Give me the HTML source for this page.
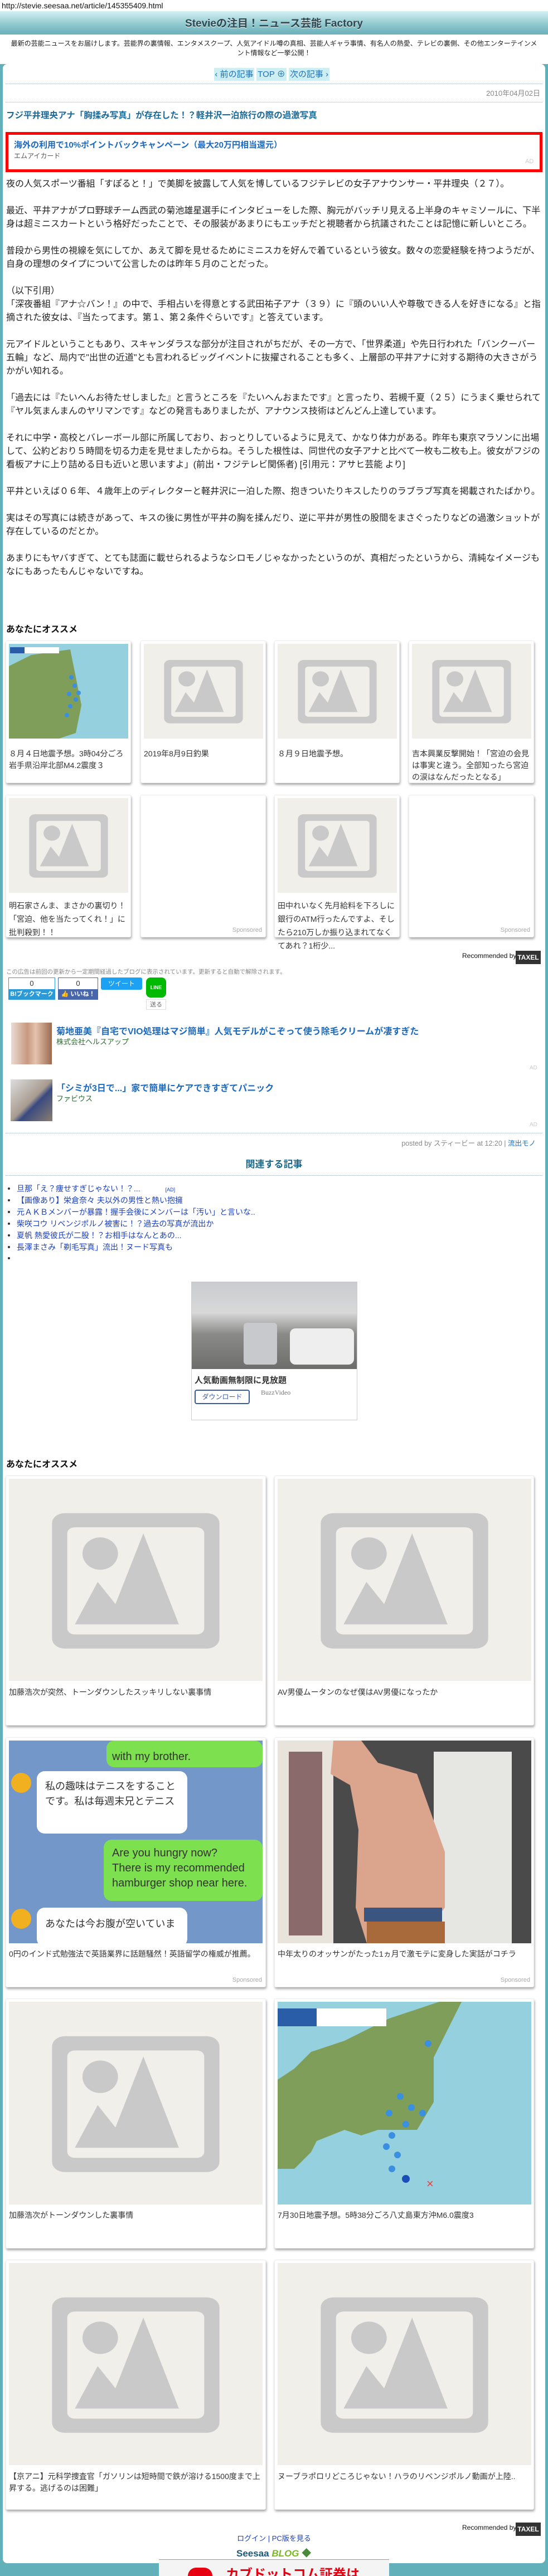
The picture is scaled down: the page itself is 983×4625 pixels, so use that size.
<!DOCTYPE html>
<html><head><meta charset="utf-8"><style>
*{margin:0;padding:0;box-sizing:border-box}
body{width:983px;height:4625px;position:relative;background:#62b0b9;font-family:"Liberation Sans","Noto Sans CJK JP",sans-serif;color:#222;overflow:hidden}
.a{position:absolute}
.nw{white-space:nowrap}
#top{left:0;top:0;width:983px;height:115px;background:#fff}
#hdr{left:0;top:20px;width:983px;height:42px;background:linear-gradient(#d4f1f3,#8cc6cd 60%,#6cb0b9);text-align:center;font-size:19px;font-weight:bold;color:#2d4650;line-height:46px;text-shadow:0 1px 0 #fff}
#box{left:5px;top:115px;width:973px;height:4487px;background:#fff;border-radius:8px}
.nav{top:122px;height:23px;background:#cdeef2;color:#1f6fb0;font-size:15px;line-height:23px;text-align:center}
.dot{left:10px;width:963px;border-top:1px dotted #9ab}
.body{left:11px;font-size:16px;line-height:24px;color:#222}
.card{background:#fff;border-radius:3px;box-shadow:1px 3px 4px rgba(0,0,0,.35);border:1px solid #eee}
.card .t{position:absolute;left:5px;right:5px;font-size:14px;line-height:21px;color:#333}
.sp{position:absolute;right:6px;bottom:6px;font-size:11px;color:#aaa}
.rel{left:30px;font-size:14px;color:#1a3fbf}
.bul{left:14px;width:4px;height:4px;border-radius:2px;background:#333}
</style></head><body>
<div id="top" class="a"></div>
<div class="a nw" style="left:3px;top:2px;font-size:14px;color:#111">http://stevie.seesaa.net/article/145355409.html</div>
<div id="hdr" class="a">Stevieの注目！ニュース芸能 Factory</div>
<div class="a nw" style="left:0;top:70px;width:983px;font-size:12px;line-height:17px;text-align:center;color:#222">最新の芸能ニュースをお届けします。芸能界の裏情報、エンタメスクープ、人気アイドル噂の真相、芸能人ギャラ事情、有名人の熱愛、テレビの裏側、その他エンターテインメ<br>ント情報など一挙公開！</div>
<div id="box" class="a"></div>
<div class="a nav" style="left:384px;width:72px">‹ 前の記事</div>
<div class="a nav" style="left:460px;width:54px">TOP ⊕</div>
<div class="a nav" style="left:518px;width:73px">次の記事 ›</div>
<div class="a dot" style="top:150px"></div>
<div class="a" style="right:14px;top:157px;font-size:13px;color:#888">2010年04月02日</div>
<div class="a dot" style="top:183px"></div>
<div class="a nw" style="left:11px;top:195px;font-size:15.5px;font-weight:bold;color:#1b6a9a">フジ平井理央アナ「胸揉み写真」が存在した！？軽井沢一泊旅行の際の過激写真</div>
<div class="a" style="left:10px;top:237px;width:963px;height:72px;border:5px solid #f00;background:#fff"></div>
<div class="a nw" style="left:25px;top:249px;font-size:15px;font-weight:bold;color:#1c6ac0">海外の利用で10%ポイントバックキャンペーン（最大20万円相当還元）</div>
<div class="a nw" style="left:25px;top:271px;font-size:12px;color:#555">エムアイカード</div>
<div class="a" style="left:942px;top:284px;font-size:11px;color:#ccc">AD</div>
<div class="a body nw" style="top:319px">夜の人気スポーツ番組「すぽると！」で美脚を披露して人気を博しているフジテレビの女子アナウンサー・平井理央（２７）。<br><br>最近、平井アナがプロ野球チーム西武の菊池雄星選手にインタビューをした際、胸元がバッチリ見える上半身のキャミソールに、下半<br>身は超ミニスカートという格好だったことで、その服装があまりにもエッチだと視聴者から抗議されたことは記憶に新しいところ。<br><br>普段から男性の視線を気にしてか、あえて脚を見せるためにミニスカを好んで着ているという彼女。数々の恋愛経験を持つようだが、<br>自身の理想のタイプについて公言したのは昨年５月のことだった。<br><br>（以下引用）<br>「深夜番組『アナ☆バン！』の中で、手相占いを得意とする武田祐子アナ（３９）に『頭のいい人や尊敬できる人を好きになる』と指<br>摘された彼女は、『当たってます。第１、第２条件ぐらいです』と答えています。<br><br>元アイドルということもあり、スキャンダラスな部分が注目されがちだが、その一方で、「世界柔道」や先日行われた「バンクーバー<br>五輪」など、局内で"出世の近道"とも言われるビッグイベントに抜擢されることも多く、上層部の平井アナに対する期待の大きさがう<br>かがい知れる。<br><br>「過去には『たいへんお待たせしました』と言うところを『たいへんおまたです』と言ったり、若槻千夏（２５）にうまく乗せられて<br>『ヤル気まんまんのヤリマンです』などの発言もありましたが、アナウンス技術はどんどん上達しています。<br><br>それに中学・高校とバレーボール部に所属しており、おっとりしているように見えて、かなり体力がある。昨年も東京マラソンに出場<br>して、公約どおり５時間を切る力走を見せましたからね。そうした根性は、同世代の女子アナと比べて一枚も二枚も上。彼女がフジの<br>看板アナに上り詰める日も近いと思いますよ」(前出・フジテレビ関係者) [引用元：アサヒ芸能 より]<br><br>平井といえば０６年、４歳年上のディレクターと軽井沢に一泊した際、抱きついたりキスしたりのラブラブ写真を掲載されたばかり。<br><br>実はその写真には続きがあって、キスの後に男性が平井の胸を揉んだり、逆に平井が男性の股間をまさぐったりなどの過激ショットが<br>存在しているのだとか。<br><br>あまりにもヤバすぎて、とても誌面に載せられるようなシロモノじゃなかったというのが、真相だったというから、清純なイメージも<br>なにもあったもんじゃないですね。</div>

<svg width="0" height="0" style="position:absolute"><defs>
<symbol id="ph" viewBox="0 0 100 100" preserveAspectRatio="none"><rect width="100" height="100" fill="#f0efea"/><rect x="17" y="17" width="66" height="67" rx="5" fill="#c9c9c9"/><rect x="23" y="24" width="54" height="53" rx="3" fill="#f0efea"/><ellipse cx="36" cy="37" rx="7" ry="8" fill="#c9c9c9"/><polygon points="26,72 35,51 42,62 53,27 67,72" fill="#c9c9c9"/></symbol>
</defs></svg>

<div class="a" style="left:11px;top:1116px;font-size:16px;font-weight:bold;color:#111">あなたにオススメ</div>

<div class="a card" style="left:10px;top:1150px;width:225px;height:256px"><svg class="a" style="left:5px;top:5px" width="214" height="170" viewBox="0 0 214 170"><rect width="214" height="170" fill="#95d0de"/><path d="M0 40 L40 20 L110 10 L120 60 L130 110 L120 160 L90 170 L0 170Z" fill="#7f9e5a"/><rect x="2" y="6" width="88" height="11" fill="#fff"/><rect x="2" y="6" width="26" height="11" fill="#2a5da8"/><g fill="#3b8fe0"><circle cx="112" cy="60" r="4"/><circle cx="118" cy="75" r="4"/><circle cx="108" cy="90" r="4"/><circle cx="120" cy="100" r="4"/><circle cx="110" cy="112" r="4"/><circle cx="125" cy="88" r="4"/><circle cx="104" cy="128" r="4"/></g></svg><div class="t" style="top:192px">８月４日地震予想。3時04分ごろ岩手県沿岸北部M4.2震度３</div></div>
<div class="a card" style="left:252px;top:1150px;width:225px;height:256px"><svg class="a" style="left:5px;top:5px" width="214" height="170"><use href="#ph" width="214" height="170"/></svg><div class="t" style="top:192px">2019年8月9日釣果</div></div>
<div class="a card" style="left:492px;top:1150px;width:225px;height:256px"><svg class="a" style="left:5px;top:5px" width="214" height="170"><use href="#ph" width="214" height="170"/></svg><div class="t" style="top:192px">８月９日地震予想。</div></div>
<div class="a card" style="left:733px;top:1150px;width:225px;height:256px"><svg class="a" style="left:5px;top:5px" width="214" height="170"><use href="#ph" width="214" height="170"/></svg><div class="t" style="top:192px">吉本興業反撃開始！「宮迫の会見は事実と違う。全部知ったら宮迫の涙はなんだったとなる」</div></div>

<div class="a card" style="left:10px;top:1427px;width:225px;height:256px"><svg class="a" style="left:5px;top:5px" width="214" height="170"><use href="#ph" width="214" height="170"/></svg><div class="t" style="top:186px;font-size:14px;line-height:24px">明石家さんま、まさかの裏切り！「宮迫、他を当たってくれ！」に批判殺到！！</div></div>
<div class="a card" style="left:252px;top:1427px;width:225px;height:256px"><span class="sp">Sponsored</span></div>
<div class="a card" style="left:492px;top:1427px;width:225px;height:256px"><svg class="a" style="left:5px;top:5px" width="214" height="170"><use href="#ph" width="214" height="170"/></svg><div class="t" style="top:186px;font-size:14px;line-height:24px">田中れいなく先月給料を下ろしに銀行のATM行ったんですよ、そしたら210万しか振り込まれてなくてあれ？1桁少...</div></div>
<div class="a card" style="left:733px;top:1427px;width:225px;height:256px"><span class="sp">Sponsored</span></div>

<div class="a nw" style="left:829px;top:1709px;font-size:12px;color:#111">Recommended by</div>
<div class="a" style="left:925px;top:1707px;width:45px;height:24px;background:#333;color:#fff;font-size:12px;font-weight:bold;text-align:center;line-height:24px">TAXEL</div>
<div class="a nw" style="left:11px;top:1737px;font-size:10.5px;color:#888">この広告は前回の更新から一定期間経過したブログに表示されています。更新すると自動で解除されます。</div>
<div class="a" style="left:15px;top:1755px;width:84px;height:40px;border:1px solid #2d9ad8;background:#fff"><div style="text-align:center;font-size:13px;line-height:20px;color:#333">0</div><div class="nw" style="background:#2d9ad8;color:#fff;font-size:11px;font-weight:bold;line-height:19px;text-align:center">B!ブックマーク</div></div>
<div class="a" style="left:104px;top:1755px;width:72px;height:40px;border:1px solid #4867aa;background:#fff"><div style="text-align:center;font-size:13px;line-height:20px;color:#333">0</div><div class="nw" style="background:#4867aa;color:#fff;font-size:11px;font-weight:bold;line-height:19px;text-align:center">👍 いいね！</div></div>
<div class="a nw" style="left:181px;top:1755px;width:74px;height:22px;background:#1da1f2;border-radius:3px;color:#fff;font-size:12px;line-height:22px;text-align:center">ツイート</div>
<div class="a" style="left:262px;top:1755px;width:36px;height:36px;background:#00b900;border-radius:8px;color:#fff;font-size:9px;font-weight:bold;text-align:center;line-height:36px">LINE</div>
<div class="a" style="left:262px;top:1794px;width:36px;height:19px;border:1px solid #ddd;font-size:11px;color:#666;text-align:center;line-height:18px">送る</div>

<div class="a" style="left:20px;top:1836px;width:73px;height:75px;background:linear-gradient(90deg,#e9dcd3,#c89880 40%,#e6c3ae 60%,#9a6a50)"></div>
<div class="a nw" style="left:101px;top:1838px;font-size:16px;font-weight:bold;color:#1c6ac0">菊地亜美『自宅でVIO処理はマジ簡単』人気モデルがこぞって使う除毛クリームが凄すぎた</div>
<div class="a nw" style="left:101px;top:1860px;font-size:13px;color:#2b6a30">株式会社ヘルスアップ</div>
<div class="a" style="left:950px;top:1912px;font-size:10px;color:#ccc">AD</div>
<div class="a" style="left:19px;top:1938px;width:75px;height:75px;background:linear-gradient(135deg,#ddd,#a89c90 50%,#3a4a80 60%,#8a7d70)"></div>
<div class="a nw" style="left:101px;top:1940px;font-size:16px;font-weight:bold;color:#1c6ac0">「シミが3日で...」家で簡単にケアできすぎてパニック</div>
<div class="a nw" style="left:101px;top:1962px;font-size:13px;color:#2b6a30">ファビウス</div>
<div class="a" style="left:950px;top:2014px;font-size:10px;color:#ccc">AD</div>
<div class="a dot" style="top:2034px"></div>
<div class="a nw" style="right:22px;top:2042px;font-size:12.5px;color:#888">posted by スティービー at 12:20 | <span style="color:#1c6ac0">流出モノ</span></div>
<div class="a" style="left:0;width:983px;top:2076px;text-align:center;font-size:17px;font-weight:bold;color:#1b6a8a">関連する記事</div>
<div class="a dot" style="top:2110px"></div>
<div class="a bul" style="top:2132px"></div><div class="a rel nw" style="top:2124px">旦那「え？痩せすぎじゃない！？...<span style="font-size:9px;margin-left:45px">[AD]</span></div>
<div class="a bul" style="top:2153px"></div><div class="a rel nw" style="top:2145px">【画像あり】栄倉奈々 夫以外の男性と熱い抱擁</div>
<div class="a bul" style="top:2174px"></div><div class="a rel nw" style="top:2166px">元ＡＫＢメンバーが暴露！握手会後にメンバーは「汚い」と言いな..</div>
<div class="a bul" style="top:2195px"></div><div class="a rel nw" style="top:2187px">柴咲コウ リベンジポルノ被害に！？過去の写真が流出か</div>
<div class="a bul" style="top:2216px"></div><div class="a rel nw" style="top:2208px">夏帆 熱愛彼氏が二股！？お相手はなんとあの...</div>
<div class="a bul" style="top:2237px"></div><div class="a rel nw" style="top:2229px">長澤まさみ「剃毛写真」流出！ヌード写真も</div>
<div class="a bul" style="top:2257px"></div>

<div class="a" style="left:343px;top:2301px;width:298px;height:249px;border:1px solid #ccc;background:#fff"></div>
<div class="a" style="left:344px;top:2302px;width:296px;height:156px;background:linear-gradient(#c9ccd0,#d8d8d8 35%,#8a8a88 60%,#6d6d6c)"></div>
<div class="a" style="left:437px;top:2375px;width:60px;height:75px;background:#c7c9cc;border-radius:6px"></div>
<div class="a" style="left:520px;top:2385px;width:115px;height:65px;background:#eeeeee;border-radius:10px"></div>
<div class="a nw" style="left:349px;top:2467px;font-size:15px;font-weight:bold;color:#333">人気動画無制限に見放題</div>
<div class="a" style="left:349px;top:2495px;width:99px;height:26px;border:2px solid #3a5a9a;border-radius:4px;text-align:center;font-size:12px;line-height:22px;color:#3a5a9a">ダウンロード</div>
<div class="a nw" style="left:468px;top:2493px;font-size:12px;color:#777;font-family:'Liberation Serif',serif">BuzzVideo</div>

<div class="a" style="left:11px;top:2615px;font-size:16px;font-weight:bold;color:#111">あなたにオススメ</div>

<div class="a card" style="left:10px;top:2649px;width:467px;height:449px"><svg class="a" style="left:5px;top:5px" width="455" height="363"><use href="#ph" width="455" height="363"/></svg><div class="t" style="top:378px">加藤浩次が突然、トーンダウンしたスッキリしない裏事情</div></div>
<div class="a card" style="left:492px;top:2649px;width:466px;height:449px"><svg class="a" style="left:5px;top:5px" width="455" height="363"><use href="#ph" width="455" height="363"/></svg><div class="t" style="top:378px">AV男優ムータンのなぜ僕はAV男優になったか</div></div>

<div class="a card" style="left:10px;top:3119px;width:467px;height:449px"><svg class="a" style="left:5px;top:5px" width="455" height="364" viewBox="0 0 455 364"><rect width="455" height="364" fill="#7397c9"/><rect x="175" y="0" width="280" height="48" rx="14" fill="#7de04e"/><text x="185" y="35" font-size="20" fill="#333" font-family="Liberation Sans">with my brother.</text><circle cx="22" cy="76" r="18" fill="#f0b020"/><rect x="50" y="55" width="270" height="112" rx="14" fill="#fff"/><text x="65" y="88" font-size="18" fill="#333" font-family="Noto Sans CJK JP">私の趣味はテニスをすること</text><text x="65" y="115" font-size="18" fill="#333" font-family="Noto Sans CJK JP">です。私は毎週末兄とテニス</text><rect x="170" y="178" width="285" height="110" rx="14" fill="#7de04e"/><text x="185" y="208" font-size="20" fill="#333" font-family="Liberation Sans">Are you hungry now?</text><text x="185" y="235" font-size="20" fill="#333" font-family="Liberation Sans">There is my recommended</text><text x="185" y="262" font-size="20" fill="#333" font-family="Liberation Sans">hamburger shop near here.</text><circle cx="22" cy="320" r="18" fill="#f0b020"/><rect x="50" y="300" width="270" height="70" rx="14" fill="#fff"/><text x="65" y="335" font-size="18" fill="#333" font-family="Noto Sans CJK JP">あなたは今お腹が空いていま</text></svg><div class="t" style="top:378px">0円のインド式勉強法で英語業界に話題騒然！英語留学の権威が推薦。</div><span class="sp">Sponsored</span></div>
<div class="a card" style="left:492px;top:3119px;width:466px;height:449px"><svg class="a" style="left:5px;top:5px" width="455" height="364" viewBox="0 0 455 364"><rect width="455" height="364" fill="#4a4a4a"/><rect x="0" y="0" width="100" height="364" fill="#e8e4dc"/><rect x="20" y="20" width="60" height="330" fill="#8a6a6a"/><rect x="280" y="20" width="140" height="344" fill="#e6e6e2"/><path d="M100 0 L150 0 L180 40 L250 60 L300 200 L300 300 L250 364 L160 364 L140 300 L145 160 L130 80 L95 60 Z" fill="#dba58d"/><rect x="155" y="300" width="140" height="25" fill="#3a5580"/><rect x="160" y="325" width="140" height="39" fill="#a86a3a"/></svg><div class="t" style="top:378px">中年太りのオッサンがたった1ヵ月で激モテに変身した実話がコチラ</div><span class="sp">Sponsored</span></div>

<div class="a card" style="left:10px;top:3588px;width:467px;height:449px"><svg class="a" style="left:5px;top:5px" width="455" height="364"><use href="#ph" width="455" height="364"/></svg><div class="t" style="top:378px">加藤浩次がトーンダウンした裏事情</div></div>
<div class="a card" style="left:492px;top:3588px;width:466px;height:449px"><svg class="a" style="left:5px;top:5px" width="455" height="364" viewBox="0 0 455 364"><rect width="455" height="364" fill="#95d0de"/><path d="M0 140 L30 120 L60 90 L120 70 L200 30 L290 0 L330 0 L280 100 L280 180 L250 230 L180 230 L150 240 L120 230 L70 250 L60 270 L30 300 L0 300 Z" fill="#7f9e5a"/><rect x="0" y="12" width="195" height="32" fill="#fff"/><rect x="0" y="12" width="70" height="32" fill="#2a5da8"/><g fill="#3b8fe0"><circle cx="270" cy="75" r="6"/><circle cx="220" cy="170" r="6"/><circle cx="240" cy="190" r="6"/><circle cx="260" cy="200" r="6"/><circle cx="200" cy="200" r="6"/><circle cx="230" cy="220" r="6"/><circle cx="205" cy="240" r="6"/><circle cx="195" cy="260" r="6"/><circle cx="215" cy="275" r="6"/><circle cx="205" cy="300" r="6"/></g><circle cx="230" cy="318" r="7" fill="#1c4eb8"/><text x="267" y="334" font-size="22" fill="#e64040">×</text></svg><div class="t" style="top:378px">7月30日地震予想。5時38分ごろ八丈島東方沖M6.0震度3</div></div>

<div class="a card" style="left:10px;top:4057px;width:467px;height:449px"><svg class="a" style="left:5px;top:5px" width="455" height="363"><use href="#ph" width="455" height="363"/></svg><div class="t" style="top:378px">【京アニ】元科学捜査官「ガソリンは短時間で鉄が溶ける1500度まで上昇する。逃げるのは困難」</div></div>
<div class="a card" style="left:492px;top:4057px;width:466px;height:449px"><svg class="a" style="left:5px;top:5px" width="455" height="363"><use href="#ph" width="455" height="363"/></svg><div class="t" style="top:378px">ヌーブラポロリどころじゃない！ハラのリベンジポルノ動画が上陸..</div></div>

<div class="a nw" style="left:829px;top:4531px;font-size:12px;color:#111">Recommended by</div>
<div class="a" style="left:925px;top:4529px;width:45px;height:24px;background:#333;color:#fff;font-size:12px;font-weight:bold;text-align:center;line-height:24px">TAXEL</div>
<div class="a" style="left:0;width:983px;top:4547px;text-align:center;font-size:13px;color:#1a3fbf">ログイン | PC版を見る</div>
<div class="a nw" style="left:424px;top:4570px;font-size:17px;font-weight:bold;color:#1b5a7a">Seesaa <i style="color:#7cb82a">BLOG</i> <span style="color:#4a8a3a">◆</span></div>
<div class="a" style="left:285px;top:4595px;width:413px;height:30px;background:#f4f4f4;border-top:1px solid #999;overflow:hidden"><div class="a" style="left:52px;top:14px;width:44px;height:30px;border-radius:22px;background:#e60012"></div><div class="a nw" style="left:120px;top:6px;font-size:24px;font-weight:bold;color:#e60012">カブドットコム証券は</div></div>
</body></html>
